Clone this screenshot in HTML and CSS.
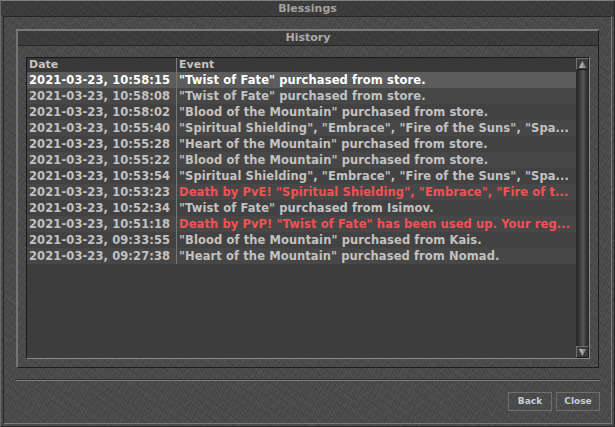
FILE: index.html
```html
<!DOCTYPE html>
<html>
<head>
<meta charset="utf-8">
<link rel="stylesheet" href="styles.css">
</head>
<body>
<div class="window stone">
  <div class="titlebar">Blessings</div>
  <div class="frame-body">
    <div class="panel">
      <div class="panel-title">History</div>
      <div class="panel-content">
        <div class="listbox">
          <div class="list">
            <div class="list-head">
              <div class="col-date">Date</div>
              <div class="col-event">Event</div>
            </div>
            <div class="rows">
              <div class="row sel"><div class="col-date">2021-03-23, 10:58:15</div><div class="col-event">"Twist of Fate" purchased from store.</div></div>
              <div class="row"><div class="col-date">2021-03-23, 10:58:08</div><div class="col-event">"Twist of Fate" purchased from store.</div></div>
              <div class="row"><div class="col-date">2021-03-23, 10:58:02</div><div class="col-event">"Blood of the Mountain" purchased from store.</div></div>
              <div class="row"><div class="col-date">2021-03-23, 10:55:40</div><div class="col-event">"Spiritual Shielding", "Embrace", "Fire of the Suns", "Spa...</div></div>
              <div class="row"><div class="col-date">2021-03-23, 10:55:28</div><div class="col-event">"Heart of the Mountain" purchased from store.</div></div>
              <div class="row"><div class="col-date">2021-03-23, 10:55:22</div><div class="col-event">"Blood of the Mountain" purchased from store.</div></div>
              <div class="row"><div class="col-date">2021-03-23, 10:53:54</div><div class="col-event">"Spiritual Shielding", "Embrace", "Fire of the Suns", "Spa...</div></div>
              <div class="row"><div class="col-date">2021-03-23, 10:53:23</div><div class="col-event red">Death by PvE! "Spiritual Shielding", "Embrace", "Fire of t...</div></div>
              <div class="row"><div class="col-date">2021-03-23, 10:52:34</div><div class="col-event">"Twist of Fate" purchased from Isimov.</div></div>
              <div class="row"><div class="col-date">2021-03-23, 10:51:18</div><div class="col-event red">Death by PvP! "Twist of Fate" has been used up. Your reg...</div></div>
              <div class="row"><div class="col-date">2021-03-23, 09:33:55</div><div class="col-event">"Blood of the Mountain" purchased from Kais.</div></div>
              <div class="row"><div class="col-date">2021-03-23, 09:27:38</div><div class="col-event">"Heart of the Mountain" purchased from Nomad.</div></div>
            </div>
          </div>
          <div class="scrollbar">
            <div class="sb-btn"><svg width="11" height="11" viewBox="0 0 11 11"><polygon points="5.5,2 9,9 2,9" fill="#8c8c8c"/><polygon points="5.5,2 5.5,9 2,9" fill="#b0b0b0"/></svg></div>
            <div class="sb-track"><div class="sb-thumb"></div></div>
            <div class="sb-btn"><svg width="11" height="11" viewBox="0 0 11 11"><polygon points="2,2 9,2 5.5,9" fill="#8c8c8c"/><polygon points="2,2 5.5,2 5.5,9" fill="#b0b0b0"/></svg></div>
          </div>
        </div>
      </div>
    </div>
    <div class="separator"></div>
    <div class="buttons">
      <div class="btn">Back</div>
      <div class="btn">Close</div>
    </div>
  </div>
</div>
</body>
</html>
```

FILE: styles.css
```css
html, body {
  margin: 0;
  padding: 0;
  background: #1e1e1e;
}
body {
  font-family: "DejaVu Sans", Verdana, sans-serif;
}
.stone {
  background-color: #4a4a4a;
  background-image:
    repeating-linear-gradient(62deg, rgba(255,255,255,0.045) 0 1px, transparent 1px 3px),
    repeating-linear-gradient(118deg, rgba(0,0,0,0.08) 0 1px, transparent 1px 5px),
    repeating-linear-gradient(35deg, rgba(0,0,0,0.06) 0 2px, transparent 2px 7px),
    repeating-linear-gradient(150deg, rgba(255,255,255,0.03) 0 1px, transparent 1px 9px);
}
.window {
  width: 615px;
  height: 427px;
  box-sizing: border-box;
  border: 1px solid;
  border-color: #7e7e7e #282828 #262626 #6a6a6a;
  display: flex;
  flex-direction: column;
}
.titlebar {
  height: 15px;
  line-height: 15px;
  text-align: center;
  font-size: 11px;
  font-weight: bold;
  color: #a2a2a2;
  background-color: rgba(0,0,0,0.2);
  flex: none;
}
.frame-body {
  flex: 1;
  margin: 0 2px 2px 2px;
  border: 1px solid;
  border-color: #262626 #7a7a7a #7a7a7a #262626;
  padding: 12px 12px 0 12px;
  display: flex;
  flex-direction: column;
}
.panel {
  height: 339px;
  box-sizing: border-box;
  border: 2px solid;
  border-color: #7a7a7a #1e1e1e #1e1e1e #747474;
  border-right-width: 1px;
  border-bottom-width: 1px;
  display: flex;
  flex-direction: column;
}
.panel-title {
  height: 14px;
  line-height: 14px;
  border-bottom: 1px solid #262626;
  background-color: rgba(0,0,0,0.2);
  text-align: center;
  font-size: 11px;
  font-weight: bold;
  color: #acacac;
}
.panel-content {
  flex: 1;
  padding: 11px 8px 8px 8px;
  display: flex;
}
.listbox {
  flex: 1;
  border: 1px solid;
  border-color: #1a1a1a #8a8a8a #8a8a8a #1a1a1a;
  background: #3d3d3d;
  display: flex;
}
.list {
  flex: 1;
  display: flex;
  flex-direction: column;
  min-width: 0;
}
.list-head {
  height: 14px;
  display: flex;
  background: #383838;
  font-size: 11px;
  line-height: 14px;
  color: #c4c4c4;
  font-weight: bold;
}
.list-head .col-date {
  border-right: 1px solid #7c7c7c;
}
.rows {
  display: flex;
  flex-direction: column;
}
.row {
  height: 16px;
  display: flex;
  font-size: 11.5px;
  line-height: 16px;
  font-weight: bold;
  color: #c2c2c2;
  background: #474747;
}
.row:nth-child(odd) {
  background: #424242;
}
.row.sel {
  background: #5c5c5c;
  color: #ffffff;
}
.col-date {
  width: 147px;
  flex: none;
  padding-left: 2px;
  border-right: 1px solid #777777;
  white-space: nowrap;
  overflow: hidden;
}
.row .col-date {
  letter-spacing: 0.1px;
}
.col-event {
  flex: 1;
  padding-left: 2px;
  white-space: nowrap;
  overflow: hidden;
}
.row .col-event {
  letter-spacing: 0.1px;
}
.red {
  color: #f25252;
}
.scrollbar {
  width: 13px;
  flex: none;
  display: flex;
  flex-direction: column;
  background: #2c2c2c;
}
.sb-btn {
  height: 12px;
  box-sizing: border-box;
  border: 1px solid;
  border-color: #707070 #1c1c1c #1c1c1c #707070;
  background: #3c3c3c;
  display: flex;
  align-items: center;
  justify-content: center;
}
.sb-btn svg {
  display: block;
}
.sb-track {
  flex: 1;
  padding: 0 1px;
  display: flex;
}
.sb-thumb {
  flex: 1;
  border-radius: 5px;
  background: linear-gradient(90deg, #262626 0%, #3a3a3a 25%, #555555 55%, #3c3c3c 80%, #262626 100%);
}
.separator {
  height: 1px;
  margin-right: -1px;
  background: #7c7c7c;
  border-top: 1px solid #333333;
  margin-top: 11px;
}
.buttons {
  margin-top: 11px;
  display: flex;
  justify-content: flex-end;
  gap: 4px;
  margin-right: -1px;
}
.btn {
  width: 44px;
  height: 19px;
  box-sizing: border-box;
  border: 1px solid #6e6e6e;
  font-size: 9px;
  font-weight: bold;
  line-height: 17px;
  text-align: center;
  color: #c6cede;
}
```
